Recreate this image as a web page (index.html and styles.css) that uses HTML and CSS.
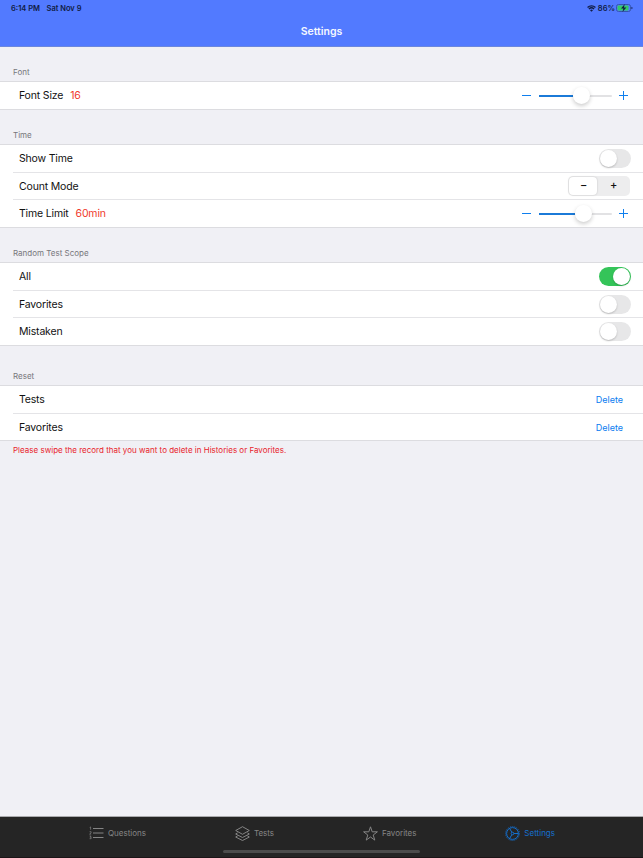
FILE: index.html
```html
<!DOCTYPE html>
<html lang="en">
  <head>
    <meta charset="UTF-8" />
    <meta name="viewport" content="width=device-width, initial-scale=1.0" />
    <title>Settings</title>
    <link rel="stylesheet" href="styles.css">
  </head>
  <body>
    <header class="navbar">
      <div class="status">
        <span class="clock">6:14 PM</span>
        <span class="date">Sat Nov 9</span>
        <svg class="wifi" viewBox="0 0 16 12">
          <path d="M1 4.2a10 10 0 0 1 14 0M3.4 6.9a6.6 6.6 0 0 1 9.2 0" />
          <path class="dot" d="M5.4 9a3.8 3.8 0 0 1 5.2 0L8 11.8z" />
        </svg>
        <span class="percent">86%</span>
        <svg class="battery" viewBox="0 0 17 8">
          <rect class="case" x="0.5" y="0.5" width="14" height="7" rx="2" />
          <rect class="level" x="1.5" y="1.5" width="11" height="5" rx="1" />
          <path d="M15.5 2.7q1 .3 1 1.3t-1 1.3z" />
          <path d="M8.8 0L5 4.5h2.4L6.4 8 10.4 3.5H7.9z" />
        </svg>
      </div>
      <h1>Settings</h1>
    </header>

    <main>
      <h2>Font</h2>
      <div class="list">
        <div class="row">
          <span class="label">Font Size</span><span class="value">16</span>
          <div class="slider">
            <span class="minus"></span>
            <div class="bar"><div class="fill"></div><div class="knob"></div></div>
            <span class="plus"></span>
          </div>
        </div>
      </div>

      <h2>Time</h2>
      <div class="list">
        <div class="row">
          <span class="label">Show Time</span>
          <div class="switch"></div>
        </div>
        <div class="row">
          <span class="label">Count Mode</span>
          <div class="segment">
            <span class="selected">−</span>
            <span>+</span>
          </div>
        </div>
        <div class="row">
          <span class="label">Time Limit</span><span class="value">60min</span>
          <div class="slider">
            <span class="minus"></span>
            <div class="bar time-bar"><div class="fill"></div><div class="knob"></div></div>
            <span class="plus"></span>
          </div>
        </div>
      </div>

      <h2>Random Test Scope</h2>
      <div class="list">
        <div class="row">
          <span class="label">All</span>
          <div class="switch on"></div>
        </div>
        <div class="row">
          <span class="label">Favorites</span>
          <div class="switch"></div>
        </div>
        <div class="row">
          <span class="label">Mistaken</span>
          <div class="switch"></div>
        </div>
      </div>

      <h2 class="reset">Reset</h2>
      <div class="list">
        <div class="row">
          <span class="label">Tests</span>
          <span class="delete">Delete</span>
        </div>
        <div class="row">
          <span class="label">Favorites</span>
          <span class="delete">Delete</span>
        </div>
      </div>
      <p class="note">Please swipe the record that you want to delete in Histories or Favorites.</p>
    </main>

    <nav class="tabs">
      <div class="tab">
        <svg viewBox="0 0 15 15">
          <path d="M4 2.5h10.500M4 7h10.500M4 11.500h10.500" />
          <path class="thin" d="M.7 1.500l.9-.6v2.800M.6 5.700h1.500v1.200L.6 8.100h1.600M.6 10h1.500l-.9 1.200h.9v1.500H.6" />
        </svg>
        <span>Questions</span>
      </div>
      <div class="tab">
        <svg viewBox="0 0 15 15">
          <path d="M7.500.7l6.800 3.800-6.800 3.800L.7 4.500zM2.600 6.900L.7 8l6.800 3.500L14.300 8l-1.900-1.100M2.600 9.900L.7 11l6.800 3.500 6.800-3.500-1.900-1.100" />
        </svg>
        <span>Tests</span>
      </div>
      <div class="tab">
        <svg viewBox="0 0 15 15">
          <path d="M7.500.8l1.700 5h5.200l-4.200 3.200 1.600 5.100-4.300-3.100-4.300 3.100 1.600-5.100L.6 5.800h5.200z" />
        </svg>
        <span>Favorites</span>
      </div>
      <div class="tab active">
        <svg viewBox="0 0 15 15">
          <circle cx="7.500" cy="7.500" r="5.900" />
          <circle class="teeth" cx="7.500" cy="7.500" r="6.900" />
          <circle cx="7.500" cy="7.500" r="1.300" />
          <path d="M8.800 7.500h4.600M6.900 6.400L4.600 2.400M6.900 8.600l-2.300 4" />
        </svg>
        <span>Settings</span>
      </div>
      <div class="home"></div>
    </nav>
  </body>
</html>
```
FILE: styles.css
```css
* {
  box-sizing: border-box;
}
body {
  margin: 0;
  height: 858px;
  display: flex;
  flex-direction: column;
  background-color: #f0f0f5;
  font-family: Inter, "Liberation Sans", sans-serif;
  color: #111;
}
.navbar {
  height: 47px;
  background-color: #527aff;
  border-bottom: 1px solid #6b87de;
}
.status {
  height: 16px;
  padding: 0 10px 0 11px;
  display: flex;
  align-items: center;
  font-size: 7.5px;
  font-weight: 600;
  color: #101c45;
}
.date {
  margin-left: 6.5px;
}
.wifi {
  width: 9px;
  height: 7px;
  margin-left: auto;
  fill: none;
  stroke: #101c45;
  stroke-width: 2.4;
}
.wifi .dot {
  fill: #101c45;
  stroke: none;
}
.percent {
  margin: 0 1px 0 2px;
}
.battery {
  width: 17px;
  height: 8px;
  fill: #101c45;
}
.battery .case {
  fill: none;
  stroke: #3655ae;
}
.battery .level {
  fill: #35c968;
}
h1 {
  margin: 0;
  line-height: 31px;
  text-align: center;
  font-size: 10.5px;
  font-weight: 600;
  color: #f4f7ff;
}
main {
  flex: 1;
}
h2 {
  margin: 0;
  height: 34px;
  padding: 19px 0 0 13px;
  font-size: 8px;
  line-height: 12px;
  font-weight: 400;
  color: #77777c;
}
h2.reset {
  height: 39px;
  padding-top: 24px;
}
.list {
  background-color: #fff;
  border-top: 1px solid #dcdce0;
  border-bottom: 1px solid #dcdce0;
}
.row {
  height: 27px;
  margin-left: 13px;
  padding: 0 12px 0 6px;
  display: flex;
  align-items: center;
  font-size: 10.5px;
  letter-spacing: -0.17px;
}
.row + .row {
  border-top: 1px solid #e4e4e7;
}
.row:nth-child(3) {
  height: 28px;
}
.value {
  margin-left: 7px;
  color: #f03a2c;
}
.slider {
  margin-left: auto;
  margin-right: 3px;
  display: flex;
  align-items: center;
}
.minus,
.plus {
  width: 9px;
  height: 9px;
  background: linear-gradient(#0f7fee, #0f7fee) center / 9px 1px no-repeat;
}
.plus {
  background: linear-gradient(#0f7fee, #0f7fee) center / 9px 1px no-repeat,
    linear-gradient(#0f7fee, #0f7fee) center / 1px 9px no-repeat;
}
.bar {
  width: 73px;
  height: 2px;
  margin: 0 7px 0 8px;
  display: flex;
  align-items: center;
  border-radius: 1px;
  background-color: #e2e2e4;
}
.fill {
  width: 34px;
  height: 2px;
  background-color: #1b7ad8;
}
.time-bar .fill {
  width: 36px;
}
.knob {
  width: 17px;
  height: 17px;
  border-radius: 50%;
  background-color: #fff;
  box-shadow: 0 2px 4px rgba(0, 0, 0, 0.2);
}
.switch {
  width: 32px;
  height: 19px;
  margin-left: auto;
  padding: 1px;
  display: flex;
  border-radius: 10px;
  background-color: #e7e7e8;
}
.switch::before {
  content: "";
  width: 17px;
  height: 17px;
  border-radius: 50%;
  background-color: #fff;
  box-shadow: 0 1px 2px rgba(0, 0, 0, 0.2);
}
.switch.on {
  justify-content: flex-end;
  background-color: #34c459;
}
.segment {
  width: 62px;
  height: 20px;
  margin-left: auto;
  margin-right: 1px;
  padding: 1px;
  display: flex;
  border-radius: 5px;
  background-color: #ededee;
}
.segment span {
  flex: 1;
  padding-left: 1px;
  text-align: center;
  font-size: 11px;
  line-height: 16px;
  font-weight: 500;
}
.segment .selected {
  flex: 0 0 28px;
  border-radius: 4px;
  background-color: #fff;
  box-shadow: 0 0 2px rgba(0, 0, 0, 0.2);
}
.delete {
  margin-left: auto;
  margin-right: 8px;
  font-size: 9px;
  letter-spacing: 0;
  color: #0a7cf0;
}
.note {
  margin: 3px 0 0 13px;
  font-size: 8px;
  line-height: 12px;
  color: #e8242c;
}
.tabs {
  position: relative;
  height: 42px;
  padding: 2px 88px 10px 89px;
  display: flex;
  justify-content: space-between;
  align-items: center;
  background-color: #252525;
  border-top: 1px solid #aaaaad;
  border-bottom: 1px solid #1c1517;
  font-size: 8px;
  color: #858585;
}
.tab {
  display: flex;
  align-items: center;
}
.tab svg {
  width: 15px;
  height: 15px;
  margin-right: 4px;
  fill: none;
  stroke: #858585;
  stroke-width: 1;
}
.tab svg .thin {
  stroke-width: 0.7;
}
.active {
  color: #1570cf;
}
.tab.active svg {
  stroke: #1570cf;
}
.active svg .teeth {
  stroke-width: 0.9;
  stroke-dasharray: 1.1 1.036;
}
/* home indicator sits over the tab bar */
.home {
  position: absolute;
  left: 223px;
  bottom: 4px;
  width: 197px;
  height: 3px;
  border-radius: 2px;
  background-color: #4c4c4c;
}
```
